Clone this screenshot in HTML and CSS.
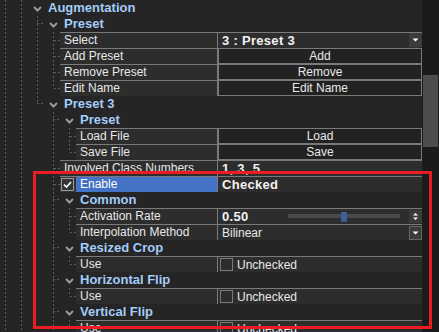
FILE: index.html
```html
<!DOCTYPE html>
<html>
<head>
<meta charset="utf-8">
<link rel="stylesheet" href="styles.css">
</head>
<body>
<div class="win">
  <div class="tree">
    <div class="row"><i class="g v"></i><i class="g v"></i><i class="chev"><svg width="9" height="6" viewBox="0 0 9 6"><path d="M1 1l3.5 3.5L8 1" fill="none" stroke="#9a9a9a" stroke-width="2"/></svg></i><span class="ht">Augmentation</span></div>
    <div class="row"><i class="g v"></i><i class="g v"></i><i class="g t"></i><i class="chev"><svg width="9" height="6" viewBox="0 0 9 6"><path d="M1 1l3.5 3.5L8 1" fill="none" stroke="#9a9a9a" stroke-width="2"/></svg></i><span class="ht">Preset</span></div>
    <div class="row"><i class="g v"></i><i class="g v"></i><i class="g v"></i><i class="g ts"></i>
      <div class="cells"><div class="lbl">Select</div><div class="val txt"><b class="bv">3 : Preset 3</b><span class="dd"><svg width="11" height="12" viewBox="0 0 11 12"><path d="M2.5 4.5h6l-3 3z" fill="#fff"/></svg></span></div></div></div>
    <div class="row"><i class="g v"></i><i class="g v"></i><i class="g v"></i><i class="g ts"></i>
      <div class="cells"><div class="lbl">Add Preset</div><div class="val"><span class="btn">Add</span></div></div></div>
    <div class="row"><i class="g v"></i><i class="g v"></i><i class="g v"></i><i class="g ts"></i>
      <div class="cells"><div class="lbl">Remove Preset</div><div class="val"><span class="btn">Remove</span></div></div></div>
    <div class="row"><i class="g v"></i><i class="g v"></i><i class="g v"></i><i class="g ls"></i>
      <div class="cells"><div class="lbl">Edit Name</div><div class="val"><span class="btn">Edit Name</span></div></div></div>
    <div class="row"><i class="g v"></i><i class="g v"></i><i class="g l"></i><i class="chev"><svg width="9" height="6" viewBox="0 0 9 6"><path d="M1 1l3.5 3.5L8 1" fill="none" stroke="#9a9a9a" stroke-width="2"/></svg></i><span class="ht">Preset 3</span></div>
    <div class="row"><i class="g v"></i><i class="g v"></i><i class="g"></i><i class="g t"></i><i class="chev"><svg width="9" height="6" viewBox="0 0 9 6"><path d="M1 1l3.5 3.5L8 1" fill="none" stroke="#9a9a9a" stroke-width="2"/></svg></i><span class="ht">Preset</span></div>
    <div class="row"><i class="g v"></i><i class="g v"></i><i class="g"></i><i class="g v"></i><i class="g ts"></i>
      <div class="cells"><div class="lbl">Load File</div><div class="val"><span class="btn">Load</span></div></div></div>
    <div class="row"><i class="g v"></i><i class="g v"></i><i class="g"></i><i class="g v"></i><i class="g ls"></i>
      <div class="cells"><div class="lbl">Save File</div><div class="val"><span class="btn">Save</span></div></div></div>
    <div class="row"><i class="g v"></i><i class="g v"></i><i class="g"></i><i class="g ts"></i>
      <div class="cells"><div class="lbl">Involved Class Numbers</div><div class="val txt"><b class="bv">1, 3, 5</b></div></div></div>
    <div class="row"><i class="g v"></i><i class="g v"></i><i class="g"></i><i class="g ts"></i>
      <div class="cells"><span class="cbcell"><span class="cb"><svg width="11" height="11" viewBox="0 0 11 11"><path d="M2 5.5l2.5 2.5L9 3" fill="none" stroke="#fff" stroke-width="1.6"/></svg></span></span><div class="lbl sel">Enable</div><div class="val txt"><b class="bv">Checked</b></div></div></div>
    <div class="row"><i class="g v"></i><i class="g v"></i><i class="g"></i><i class="g t"></i><i class="chev"><svg width="9" height="6" viewBox="0 0 9 6"><path d="M1 1l3.5 3.5L8 1" fill="none" stroke="#9a9a9a" stroke-width="2"/></svg></i><span class="ht">Common</span></div>
    <div class="row"><i class="g v"></i><i class="g v"></i><i class="g"></i><i class="g v"></i><i class="g ts"></i>
      <div class="cells"><div class="lbl">Activation Rate</div><div class="val txt"><b class="bv">0.50</b><span class="track"><span class="knob"></span></span><span class="spin"><svg width="11" height="11" viewBox="0 0 11 11"><path d="M3 4.5l2.5-2.5L8 4.5z M3 6.5h5L5.5 9z" fill="#fff"/></svg></span></div></div></div>
    <div class="row"><i class="g v"></i><i class="g v"></i><i class="g"></i><i class="g v"></i><i class="g ls"></i>
      <div class="cells"><div class="lbl">Interpolation Method</div><div class="val txt"><span>Bilinear</span><span class="dd bd"><svg width="11" height="12" viewBox="0 0 11 12"><path d="M2.5 4.5h6l-3 3z" fill="#fff"/></svg></span></div></div></div>
    <div class="row"><i class="g v"></i><i class="g v"></i><i class="g"></i><i class="g t"></i><i class="chev"><svg width="9" height="6" viewBox="0 0 9 6"><path d="M1 1l3.5 3.5L8 1" fill="none" stroke="#9a9a9a" stroke-width="2"/></svg></i><span class="ht">Resized Crop</span></div>
    <div class="row"><i class="g v"></i><i class="g v"></i><i class="g"></i><i class="g v"></i><i class="g ls"></i>
      <div class="cells"><div class="lbl">Use</div><div class="val txt"><span class="box"></span><span>Unchecked</span></div></div></div>
    <div class="row"><i class="g v"></i><i class="g v"></i><i class="g"></i><i class="g t"></i><i class="chev"><svg width="9" height="6" viewBox="0 0 9 6"><path d="M1 1l3.5 3.5L8 1" fill="none" stroke="#9a9a9a" stroke-width="2"/></svg></i><span class="ht">Horizontal Flip</span></div>
    <div class="row"><i class="g v"></i><i class="g v"></i><i class="g"></i><i class="g v"></i><i class="g ls"></i>
      <div class="cells"><div class="lbl">Use</div><div class="val txt"><span class="box"></span><span>Unchecked</span></div></div></div>
    <div class="row"><i class="g v"></i><i class="g v"></i><i class="g"></i><i class="g t"></i><i class="chev"><svg width="9" height="6" viewBox="0 0 9 6"><path d="M1 1l3.5 3.5L8 1" fill="none" stroke="#9a9a9a" stroke-width="2"/></svg></i><span class="ht">Vertical Flip</span></div>
    <div class="row"><i class="g v"></i><i class="g v"></i><i class="g"></i><i class="g v"></i><i class="g ls"></i>
      <div class="cells"><div class="lbl">Use</div><div class="val txt"><span class="box"></span><span>Unchecked</span></div></div></div>
  </div>
  <div class="sb"><div class="thumb"></div></div>
  <div class="annot"></div>
</div>
</body>
</html>
```

FILE: styles.css
```css
:root {
  --dv: repeating-linear-gradient(to bottom, #5c5c5c 0 2px, transparent 2px 4px);
  --dh: repeating-linear-gradient(to right, #5c5c5c 0 2px, transparent 2px 4px);
  --line: #7a7a7a;
}
html, body { margin: 0; height: 100%; }
body {
  background: #252525;
  font-family: "Liberation Sans", Arial, sans-serif;
  font-size: 12px;
  color: #e8e8e8;
  overflow: hidden;
}
.win { display: flex; height: 332px; position: relative; overflow: hidden; }
.tree { width: 422px; flex: none; }
.row { display: flex; height: 16px; }
.g { flex: none; width: 16px; height: 16px; display: block; }
.ts, .ls { width: 12px; }
.v { background: var(--dv) 5px 0 / 1px 100% no-repeat; }
.t { background: var(--dv) 5px 0 / 1px 100% no-repeat, var(--dh) 5px 7px / 8px 1px no-repeat; }
.l { background: var(--dv) 5px 0 / 1px 8px no-repeat, var(--dh) 5px 7px / 8px 1px no-repeat; }
.ts { background: var(--dv) 5px 0 / 1px 100% no-repeat, var(--dh) 6px 8px / 6px 1px no-repeat; }
.ls { background: var(--dv) 5px 0 / 1px 8px no-repeat, var(--dh) 6px 8px / 6px 1px no-repeat; }
.chev { flex: none; width: 16px; height: 16px; display: flex; align-items: center; }
.chev svg { margin-left: 1px; margin-top: 1px; }
.ht { font-weight: bold; font-size: 13px; color: #a4ccf8; line-height: 16px; white-space: nowrap; }
.cells { flex: 1; min-width: 0; display: flex; border-top: 1px solid var(--line); height: 16px; box-sizing: border-box; }
.lbl {
  flex: 1; min-width: 0; background: #2d2d2d; border-right: 1px solid var(--line);
  padding-left: 4px; line-height: 15px; white-space: nowrap; overflow: hidden;
}
.lbl.sel { background: #4472c4; color: #fff; }
.cbcell { flex: none; width: 16px; height: 15px; background: #353535; display: flex; align-items: center; }
.cb {
  width: 13px; height: 13px; box-sizing: border-box; border: 1px solid #9a9a9a;
  margin-left: 1px; display: flex; align-items: center; justify-content: center;
}
.val {
  width: 204px; flex: none; height: 15px; display: flex; align-items: center;
  background: #2d2d2d; box-sizing: border-box; white-space: nowrap;
}
.val.txt { padding-left: 4px; }
.bv { font-size: 13px; font-weight: bold; color: #f2f2f2; letter-spacing: 0.3px; }
.btn {
  flex: 1; height: 15px; box-sizing: border-box; border: 1px solid var(--line); border-top: 0;
  background: #222; text-align: center; line-height: 14px;
}
.dd {
  margin-left: auto; width: 13px; height: 14px; box-sizing: border-box; background: #3b3b3b;
  display: flex; align-items: center; justify-content: center; align-self: flex-start;
}
.dd.bd { border: 1px solid #666; height: 14px; margin-top: 1px; }
.track {
  margin-left: auto; width: 112px; height: 10px; display: flex; align-items: center;
  background: linear-gradient(#4a4a4a, #4a4a4a) 0 2px / 100% 4px no-repeat;
}
.knob { width: 6px; height: 10px; background: #3d5f99; margin-left: 53px; }
.spin {
  margin-left: 9px; width: 13px; height: 13px; background: #3b3b3b;
  display: flex; align-items: center; justify-content: center;
}
.box { width: 13px; height: 13px; box-sizing: border-box; border: 1px solid #7a7a7a; margin: 0 4px 0 -2px; flex: none; }
.sb { width: 17px; flex: none; background: #1b1b1b; padding: 75px 0 0 1px; box-sizing: border-box; }
.thumb { width: 15px; height: 72px; background: #4d4d4d; }
.annot {
  position: absolute; left: 33px; top: 171px; width: 399px; height: 158px;
  border: 3px solid #ec1c24; box-sizing: border-box;
}
```
